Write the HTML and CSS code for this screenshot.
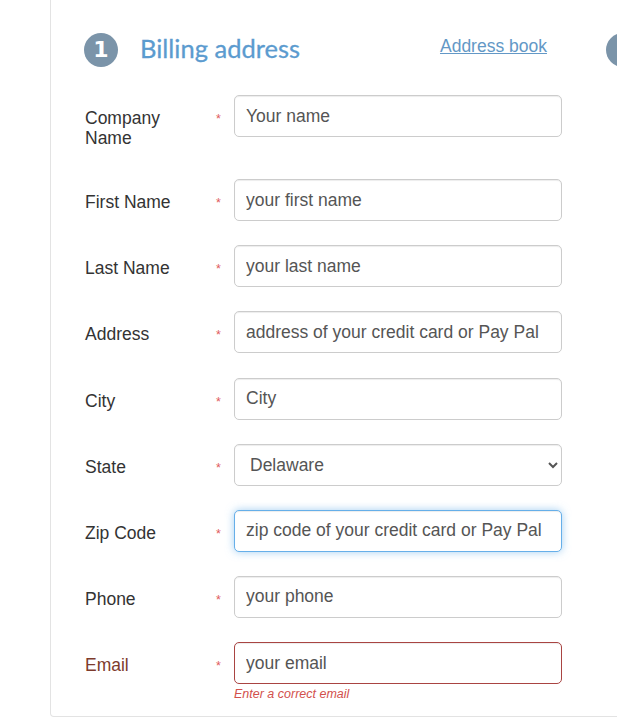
FILE: index.html
```html
<!DOCTYPE html>
<html lang="en">
<head>
    <meta charset="UTF-8">
    <meta name="viewport" content="width=device-width, initial-scale=1.0">
    <title>Checkout</title>

    <link rel="stylesheet" href="styles.css">
</head>
<body>

    <!-- 🔹 Checkout steps -->
    <div class="checkout">

        <!-- Step 1: Billing -->
        <section class="step">
            <header class="step-head">
                <span class="step-num">1</span>
                <h2>Billing address</h2>
                <a href="#" class="address-book">Address book</a>
            </header>

            <form class="billing-form">
                <div class="row">
                    <label>Company Name</label>
                    <span class="req">*</span>
                    <input type="text" value="Your name">
                </div>
                <div class="row">
                    <label>First Name</label>
                    <span class="req">*</span>
                    <input type="text" value="your first name">
                </div>
                <div class="row">
                    <label>Last Name</label>
                    <span class="req">*</span>
                    <input type="text" value="your last name">
                </div>
                <div class="row">
                    <label>Address</label>
                    <span class="req">*</span>
                    <input type="text" value="address of your credit card or Pay Pal">
                </div>
                <div class="row">
                    <label>City</label>
                    <span class="req">*</span>
                    <input type="text" value="City">
                </div>
                <div class="row">
                    <label>State</label>
                    <span class="req">*</span>
                    <select>
                        <option>Delaware</option>
                    </select>
                </div>
                <div class="row">
                    <label>Zip Code</label>
                    <span class="req">*</span>
                    <input type="text" class="focused" value="zip code of your credit card or Pay Pal">
                </div>
                <div class="row">
                    <label>Phone</label>
                    <span class="req">*</span>
                    <input type="text" value="your phone">
                </div>
                <div class="row has-error">
                    <label>Email</label>
                    <span class="req">*</span>
                    <div class="field">
                        <input type="text" value="your email">
                        <span class="help">Enter a correct email</span>
                    </div>
                </div>
            </form>
        </section>

        <!-- Step 2: next column, cut off by the window -->
        <section class="step">
            <header class="step-head">
                <span class="step-num"></span>
            </header>
        </section>

    </div>

</body>
</html>
```

FILE: styles.css
```css
body {
    font-family: "Liberation Sans", Arial, sans-serif;
    font-size: 17.5px;
    color: #333;
    margin: 0;
    padding: 0;
    background-color: #fff;
    overflow: hidden;
}

/* 🔹 Card */
.checkout {
    display: flex;
    gap: 44px;
    width: 1100px;
    margin-left: 50px;
    padding: 33px 0 13px 33px;
    border: 1px solid #e3e3e3;
    border-top: none;
    border-radius: 0 0 4px 4px;
}

.step {
    width: 478px;
    flex-shrink: 0;
}

/* 🔹 Step header */
.step-head {
    display: flex;
    align-items: center;
    height: 34px;
    padding-right: 15px;
    margin-bottom: 28px;
}

.step-num {
    width: 34px;
    height: 34px;
    border-radius: 50%;
    background-color: #7b94a9;
    color: #fff;
    font-family: "DejaVu Sans", sans-serif;
    font-weight: bold;
    font-size: 22px;
    line-height: 34px;
    text-align: center;
    flex-shrink: 0;
}

.step-head h2 {
    font-family: "Lato", "DejaVu Sans", sans-serif;
    font-weight: normal;
    font-size: 25.5px;
    color: #5b9bcf;
    margin: 0 0 0 22px;
    position: relative;
    top: -2px;
    -webkit-text-stroke: 0.3px #5b9bcf;
}

.address-book {
    margin-left: auto;
    color: #6398c6;
    font-size: 17.5px;
    position: relative;
    top: -4px;
}

/* 🔹 Form rows */
.row {
    display: grid;
    grid-template-columns: 126px 24px 328px;
    align-items: start;
    margin-bottom: 24.14px;
}

.row:last-child {
    margin-bottom: 0;
}

.row label {
    line-height: 20px;
    padding: 13px 18px 7px 1px;
}

.req {
    color: #e05a5a;
    font-size: 12.5px;
    line-height: 20px;
    padding-top: 14px;
    padding-left: 6px;
}

.row input,
.row select {
    box-sizing: border-box;
    width: 328px;
    height: 42px;
    padding: 0 11px;
    font-family: "Liberation Sans", Arial, sans-serif;
    font-size: 17.5px;
    color: #555;
    background-color: #fff;
    border: 1px solid #ccc;
    border-radius: 5px;
    box-shadow: inset 0 1px 1px rgba(0, 0, 0, 0.075);
    outline: none;
}

.row select {
    padding-left: 11px;
}

.row input.focused {
    border-color: #66afe9;
    box-shadow: inset 0 1px 1px rgba(0, 0, 0, 0.075), 0 0 8px rgba(102, 175, 233, 0.6);
}

/* 🔹 Error state */
.has-error label {
    color: #7d3b2c;
}

.has-error input {
    border-color: #a94442;
}

.field {
    display: flex;
    flex-direction: column;
}

.help {
    font-size: 12.5px;
    font-style: italic;
    color: #d2504c;
    line-height: 17px;
    margin-top: 2px;
}
```
